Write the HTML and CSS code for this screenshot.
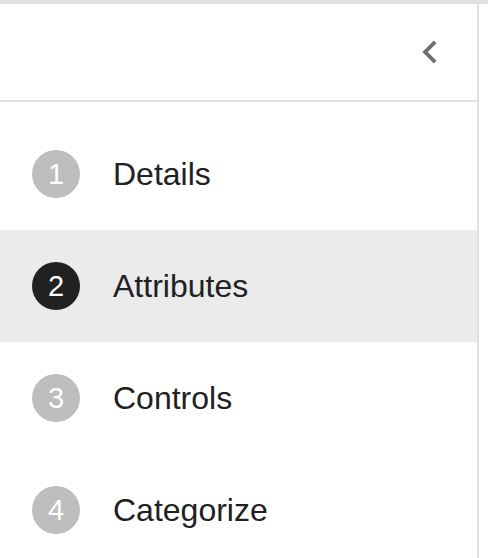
FILE: index.html
```html
<!DOCTYPE html>
<html>
<head>
<meta charset="utf-8">
<link rel="stylesheet" href="styles.css">
</head>
<body>
<div class="topbar"></div>
<div class="layout">
  <nav class="sidebar">
    <header class="sidebar-header">
      <button class="collapse" aria-label="Collapse">
        <svg width="46" height="46" viewBox="0 0 24 24"><path d="M15.41 7.41L14 6l-6 6 6 6 1.41-1.41L10.83 12z" fill="#6f6f6f"/></svg>
      </button>
    </header>
    <ol class="steps">
      <li class="step"><span class="num">1</span><span class="label">Details</span></li>
      <li class="step active"><span class="num">2</span><span class="label">Attributes</span></li>
      <li class="step"><span class="num">3</span><span class="label">Controls</span></li>
      <li class="step"><span class="num">4</span><span class="label">Categorize</span></li>
    </ol>
  </nav>
</div>
</body>
</html>
```

FILE: styles.css
```css
html, body {
  margin: 0;
  padding: 0;
  background: #ffffff;
  font-family: "Liberation Sans", Arial, Helvetica, sans-serif;
  color: #212121;
  overflow: hidden;
}
.topbar {
  height: 4px;
  background: #e0e0e0;
}
.layout {
  display: flex;
}
.sidebar {
  width: 477px;
  border-right: 2px solid #e0e0e0;
  height: 554px;
}
.sidebar-header {
  height: 96px;
  border-bottom: 2px solid #e0e0e0;
  display: flex;
  align-items: center;
  justify-content: flex-end;
  padding-right: 24px;
}
.collapse {
  border: 0;
  background: none;
  padding: 0;
  width: 46px;
  height: 46px;
  display: flex;
  margin-top: -1px;
}
.steps {
  list-style: none;
  margin: 0;
  padding: 16px 0 0 0;
}
.step {
  height: 112px;
  display: flex;
  align-items: center;
  padding-left: 32px;
}
.step.active {
  background: #ebebeb;
}
.num {
  width: 48px;
  height: 48px;
  border-radius: 50%;
  background: #bdbdbd;
  color: #ffffff;
  font-size: 29px;
  display: flex;
  align-items: center;
  justify-content: center;
  flex: none;
}
.step.active .num {
  background: #212121;
}
.label {
  margin-left: 33px;
  font-size: 32px;
  padding-top: 1px;
}
```
